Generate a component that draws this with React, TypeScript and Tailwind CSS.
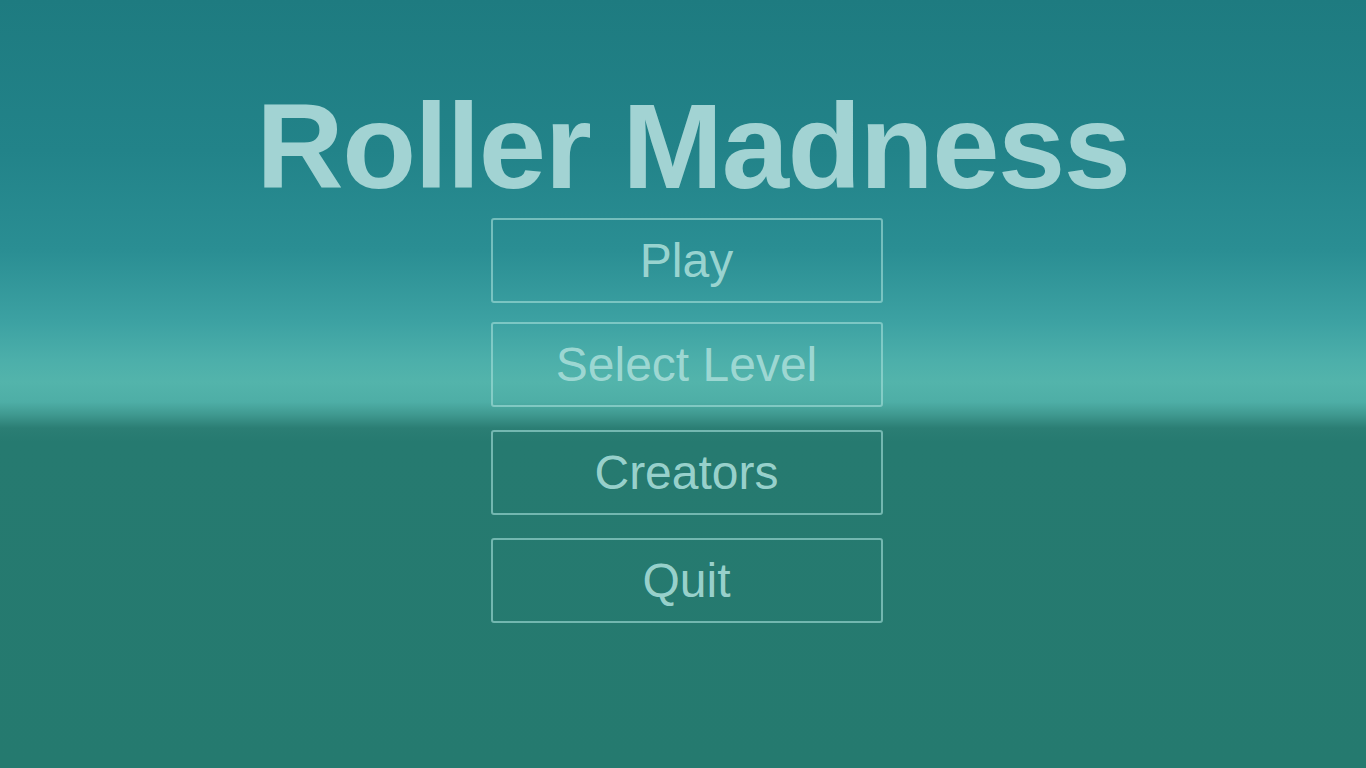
const buttons = [
  { label: "Play", mt: "mt-[9px]" },
  { label: "Select Level", mt: "mt-[19px]" },
  { label: "Creators", mt: "mt-[23px]" },
  { label: "Quit", mt: "mt-[23px]" },
];

export default function App() {
  return (
    <div
      className="h-screen w-full overflow-hidden flex flex-col items-center bg-[linear-gradient(180deg,#1e7b80_0px,#228389_150px,#2a8e93_250px,#3ca1a2_320px,#4cafaa_360px,#53b4ab_382px,#4eaea6_402px,#409a91_414px,#2b7e74_428px,#267a70_442px,#257a6f_768px)]"
      style={{ fontFamily: '"Liberation Sans", Arial, sans-serif' }}
    >
      {/* title */}
      <h1 className="pt-[86px] pl-[20px] text-[121px] leading-none font-bold tracking-[-1.5px] text-[#a2d3d3] whitespace-nowrap">
        Roller Madness
      </h1>

      {/* menu */}
      <div className="flex flex-col ml-[7px] mt-[2px]">
        {buttons.map((b) => (
          <button
            key={b.label}
            className={`${b.mt} w-[392px] h-[85px] flex items-center justify-center rounded-[3px] border-2 border-[#a6e0da]/60 text-[48px] leading-none text-[#a8ddd8]/90`}
          >
            {b.label}
          </button>
        ))}
      </div>
    </div>
  );
}
